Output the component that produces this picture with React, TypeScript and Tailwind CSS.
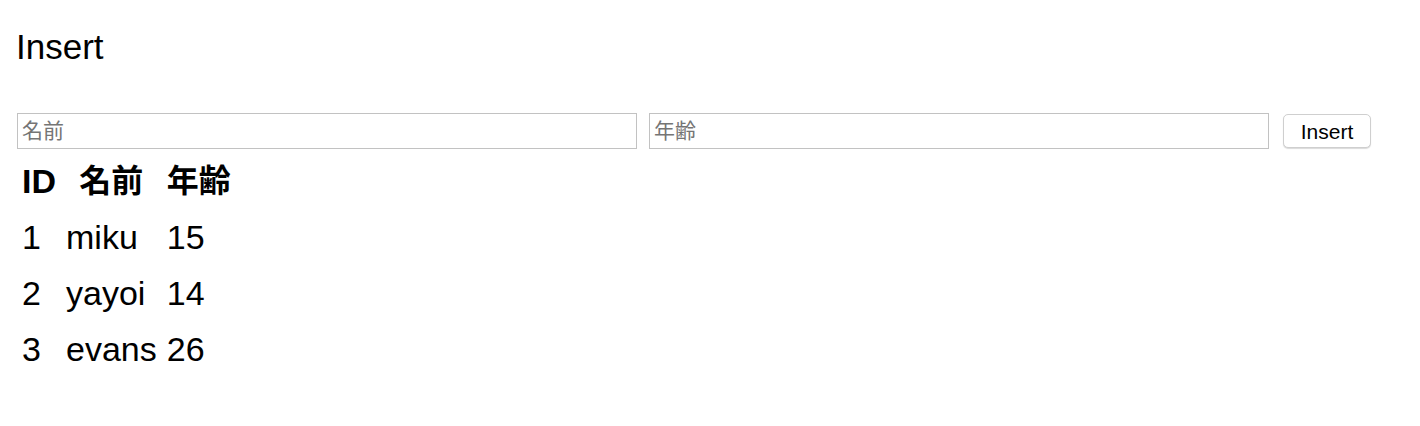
import React from "react";

const rows = [
  { id: 1, name: "miku", age: 15 },
  { id: 2, name: "yayoi", age: 14 },
  { id: 3, name: "evans", age: 26 },
];

export default function App() {
  return (
    <div
      className="min-h-[426px] w-[1420px] bg-white px-4 text-black"
      style={{ fontFamily: '"Liberation Sans", "Noto Sans CJK JP", sans-serif' }}
    >
      <h1 className="pt-[27px] text-[35px] font-normal leading-[40px]">Insert</h1>
      <div className="mt-[46px] flex items-center pl-px">
        <input
          type="text"
          placeholder="名前"
          className="h-[36px] w-[620px] border border-[#c2c2c2] px-[4px] text-[21px] outline-none placeholder:text-[#757575]"
        />
        <input
          type="text"
          placeholder="年齢"
          className="ml-[12px] h-[36px] w-[620px] border border-[#c2c2c2] px-[4px] text-[21px] outline-none placeholder:text-[#757575]"
        />
        <button className="ml-[14px] h-[34px] w-[88px] rounded-[5px] border border-[#cfcfcf] bg-white text-[21px] leading-none shadow-[0_1px_1px_rgba(0,0,0,0.15)]">
          Insert
        </button>
      </div>
      <table className="mt-[3px] border-separate border-spacing-[2px] text-[34px]">
        <thead>
          <tr>
            <th className="px-1 py-px text-center font-bold leading-[52px]">ID</th>
            <th className="px-1 py-px text-center text-[32px] font-bold leading-[52px]">名前</th>
            <th className="px-1 py-px text-center text-[32px] font-bold leading-[52px]">年齢</th>
          </tr>
        </thead>
        <tbody>
          {rows.map((r) => (
            <tr key={r.id}>
              <td className="px-1 py-px leading-[52px]">{r.id}</td>
              <td className="px-1 py-px leading-[52px]">{r.name}</td>
              <td className="px-1 py-px leading-[52px]">{r.age}</td>
            </tr>
          ))}
        </tbody>
      </table>
    </div>
  );
}
